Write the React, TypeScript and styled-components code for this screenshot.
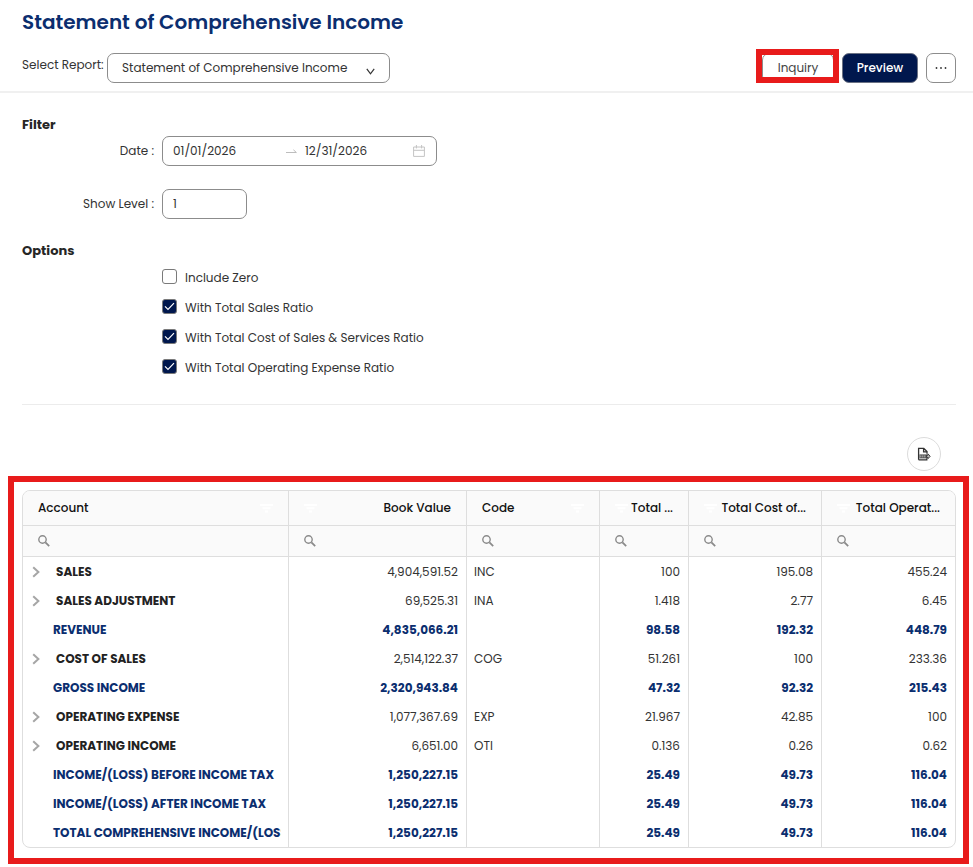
import React, { useState } from "react";
import styled, { createGlobalStyle } from "styled-components";

const NAVY = "#00174d";
const BLUE = "#0b2e6f";
const RED = "#e81b1b";
const LINE = "#dedede";

const GlobalStyle = createGlobalStyle`
  *, *::before, *::after { box-sizing: border-box; }
  body {
    margin: 0;
    background: #fff;
    color: #333;
    font-family: Poppins, Inter, "Open Sans", sans-serif;
    font-size: 12px;
    line-height: 20px;
  }
  button, input, select { font: inherit; color: inherit; margin: 0; }
`;

const Header = styled.header`
  padding: 7px 17px 8px 22px;
  border-bottom: 2px solid #f0f0f0;
`;

const Title = styled.h1`
  margin: 0 0 16px;
  font-size: 20px;
  line-height: 30px;
  font-weight: 600;
  color: ${BLUE};
`;

const Toolbar = styled.div`
  display: flex;
  align-items: center;
  justify-content: space-between;
`;

const ReportPicker = styled.div`
  display: flex;
  gap: 3px;
`;

const PickerLabel = styled.label`
  width: 82px;
  padding-top: 2px;
  white-space: nowrap;
`;

const SelectShell = styled.div`
  position: relative;
  width: 283px;
`;

const Select = styled.select`
  appearance: none;
  width: 100%;
  height: 30px;
  padding: 0 32px 0 14px;
  border: 1px solid #8c8c8c;
  border-radius: 7px;
  background: #fff;
`;

const SelectArrow = styled.svg`
  position: absolute;
  right: 15px;
  top: 15px;
  pointer-events: none;
`;

const Actions = styled.div`
  display: flex;
  gap: 8px;
`;

const Button = styled.button<{ $primary?: boolean; $width: number }>`
  display: flex;
  align-items: center;
  justify-content: center;
  width: ${(p) => p.$width}px;
  height: 30px;
  padding: 0;
  border: 1px solid ${(p) => (p.$primary ? "#6b7284" : "#8c8c8c")};
  border-radius: 7px;
  background: ${(p) => (p.$primary ? NAVY : "#fff")};
  color: ${(p) => (p.$primary ? "#fff" : "#444")};
  font-weight: ${(p) => (p.$primary ? 500 : 400)};
`;

const Marked = styled.div`
  position: relative;
  &::after {
    content: "";
    position: absolute;
    inset: -4px -5px 0 -6px;
    border: 6px solid ${RED};
    pointer-events: none;
  }
`;

const Main = styled.main`
  padding: 22px 17px 0 22px;
`;

const SectionTitle = styled.h2`
  margin: 0 0 1px;
  font-size: 13px;
  line-height: 20px;
  font-weight: 700;
  color: #262626;
`;

const Fields = styled.div`
  display: flex;
  flex-direction: column;
  gap: 23px;
  margin-bottom: 22px;
`;

const Field = styled.div`
  display: grid;
  grid-template-columns: 132px auto;
  justify-content: start;
  align-items: center;
  column-gap: 8px;
`;

const FieldLabel = styled.label`
  text-align: right;
`;

const DateRange = styled.div`
  display: flex;
  align-items: center;
  width: 275px;
  height: 30px;
  padding: 0 11px 0 10px;
  border: 1px solid #8c8c8c;
  border-radius: 7px;
`;

const DateInput = styled.input`
  flex: 1;
  min-width: 0;
  padding: 0;
  border: 0;
  outline: 0;
  background: none;
`;

const RangeArrow = styled.svg`
  margin: 0 8px 0 5px;
`;

const LevelInput = styled.input`
  width: 85px;
  height: 30px;
  padding: 0 10px;
  border: 1px solid #8c8c8c;
  border-radius: 7px;
`;

const OptionList = styled.div`
  display: flex;
  flex-direction: column;
  padding-left: 140px;
`;

const Option = styled.label`
  display: flex;
  align-items: center;
  gap: 8px;
  height: 30px;
`;

const OptionText = styled.span`
  padding-top: 2px;
`;

const CheckShell = styled.span`
  display: grid;
  padding-bottom: 1px;
  > * { grid-area: 1 / 1; place-self: center; }
  svg { pointer-events: none; }
`;

const Check = styled.input`
  appearance: none;
  width: 15px;
  height: 15px;
  border: 1px solid #7a7a7a;
  border-radius: 3px;
  background: #fff;
  &:checked { background: ${NAVY}; }
`;

const Rule = styled.hr`
  margin: 22px 0 32px;
  border: 0;
  border-top: 1px solid #ececec;
`;

const GridTools = styled.div`
  display: flex;
  justify-content: flex-end;
  padding-right: 32px;
`;

const RoundButton = styled.button`
  display: flex;
  align-items: center;
  justify-content: center;
  width: 34px;
  height: 34px;
  padding: 0;
  border: 1px solid #dcdcdc;
  border-radius: 50%;
  background: #fff;
`;

const Frame = styled.section`
  margin: 5px 4px 3px 8px;
  padding: 8px 7px 10px 8px;
  border: 6px solid ${RED};
`;

const TableShell = styled.div`
  border: 1px solid ${LINE};
  border-radius: 8px;
  overflow: hidden;
`;

const Table = styled.table`
  width: 100%;
  table-layout: fixed;
  border-collapse: separate;
  border-spacing: 0;

  th, td { border-right: 1px solid ${LINE}; }
  th:last-child, td:last-child { border-right: 0; }
`;

const Col = styled.col<{ $width: number }>`
  width: ${(p) => p.$width}px;
`;

const HeadCell = styled.th`
  height: 35px;
  padding: 0 15px;
  border-bottom: 1px solid ${LINE};
  background: #fafafa;
  color: #111;
  font-weight: 500;
`;

const HeadContent = styled.div<{ $end?: boolean }>`
  display: flex;
  flex-direction: ${(p) => (p.$end ? "row-reverse" : "row")};
  align-items: center;
  justify-content: space-between;
  white-space: nowrap;
`;

const SearchCell = styled.td`
  height: 31px;
  padding: 0 15px;
  border-bottom: 1px solid ${LINE};
  background: #fafafa;
`;

const SearchBox = styled.label`
  display: flex;
  align-items: center;
  gap: 6px;
`;

const SearchInput = styled.input`
  flex: 1;
  min-width: 0;
  padding: 0;
  border: 0;
  outline: 0;
  background: none;
`;

const Cell = styled.td<{ $end?: boolean; $total?: boolean }>`
  height: 29px;
  padding: ${(p) => (p.$end ? "0 8px" : "0 7px")};
  text-align: ${(p) => (p.$end ? "right" : "left")};
  color: ${(p) => (p.$total ? BLUE : "#333")};
  font-weight: ${(p) => (p.$total ? 700 : 400)};
  white-space: nowrap;
`;

const AccountName = styled.div<{ $total?: boolean }>`
  display: flex;
  align-items: center;
  overflow: hidden;
  padding-left: ${(p) => (p.$total ? 23 : 0)}px;
  color: ${(p) => (p.$total ? BLUE : "#222")};
  font-weight: 700;
`;

const Expander = styled.button`
  display: flex;
  align-items: center;
  width: 26px;
  height: 20px;
  padding: 0 0 0 2px;
  border: 0;
  background: none;
`;

const FilterIcon = () => (
  <svg width="13" height="9" viewBox="0 0 13 9" fill="none" stroke="#fff" strokeWidth="2" aria-hidden="true">
    <path d="M0 1h13M2.5 4.2h8M5 7.6h3" />
  </svg>
);

const SearchIcon = () => (
  <svg width="12" height="12" viewBox="0 0 12 12" fill="none" stroke="#8a8a8a" aria-hidden="true">
    <circle cx="4.5" cy="4.5" r="3.7" strokeWidth="1.4" />
    <path d="M7.4 7.4l3.8 3.8" strokeWidth="1.8" />
  </svg>
);

const ChevronIcon = () => (
  <svg width="9" height="12" viewBox="0 0 9 12" fill="none" stroke="#a6a6a6" strokeWidth="2" aria-hidden="true">
    <path d="M1.2 1.2L6.4 6l-5.2 4.8" />
  </svg>
);

const CalendarIcon = () => (
  <svg width="12" height="12" viewBox="0 0 12 12" fill="none" stroke="#c4c4c4" aria-hidden="true">
    <path d="M0.6 2h10.8v9.4H0.6zM0.6 5.3h10.8M3.4 0v3.4M8.6 0v3.4" />
  </svg>
);

const ExportIcon = () => (
  <svg width="14" height="14" viewBox="0 0 14 14" fill="none" stroke="#333" aria-hidden="true">
    <path d="M1.6 12.8V1.4h5.2l3.2 3.2v2.2M6.6 1.6v3.2h3.2M1.6 12.8h8.2v-1.6" strokeWidth="1.3" />
    <path d="M2.4 7.4h8v4h-8z" fill="#555" stroke="none" />
    <path d="M3.8 8.4v2M5.8 8.4v2M7.8 8.4v2" stroke="#ddd" strokeWidth="0.7" />
    <path d="M9.6 8.2h1.4V6.9l2.2 2.4-2.2 2.4v-1.3H9.6z" fill="#bbb" strokeWidth="0.9" />
  </svg>
);

const columns = [
  { title: "Account", width: 266, end: false },
  { title: "Book Value", width: 178, end: true },
  { title: "Code", width: 133, end: false },
  { title: "Total ...", width: 89, end: true },
  { title: "Total Cost of...", width: 133, end: true },
  { title: "Total Operat...", width: 133, end: true },
];

type Row = { account: string; values: string[]; total?: boolean };

const rows: Row[] = [
  { account: "SALES", values: ["4,904,591.52", "INC", "100", "195.08", "455.24"] },
  { account: "SALES ADJUSTMENT", values: ["69,525.31", "INA", "1.418", "2.77", "6.45"] },
  { account: "REVENUE", values: ["4,835,066.21", "", "98.58", "192.32", "448.79"], total: true },
  { account: "COST OF SALES", values: ["2,514,122.37", "COG", "51.261", "100", "233.36"] },
  { account: "GROSS INCOME", values: ["2,320,943.84", "", "47.32", "92.32", "215.43"], total: true },
  { account: "OPERATING EXPENSE", values: ["1,077,367.69", "EXP", "21.967", "42.85", "100"] },
  { account: "OPERATING INCOME", values: ["6,651.00", "OTI", "0.136", "0.26", "0.62"] },
  { account: "INCOME/(LOSS) BEFORE INCOME TAX", values: ["1,250,227.15", "", "25.49", "49.73", "116.04"], total: true },
  { account: "INCOME/(LOSS) AFTER INCOME TAX", values: ["1,250,227.15", "", "25.49", "49.73", "116.04"], total: true },
  { account: "TOTAL COMPREHENSIVE INCOME/(LOSS)", values: ["1,250,227.15", "", "25.49", "49.73", "116.04"], total: true },
];

const initialOptions = [
  { label: "Include Zero", checked: false },
  { label: "With Total Sales Ratio", checked: true },
  { label: "With Total Cost of Sales & Services Ratio", checked: true },
  { label: "With Total Operating Expense Ratio", checked: true },
];

export default function App() {
  const [options, setOptions] = useState(initialOptions);
  const toggle = (index: number) =>
    setOptions(options.map((o, i) => (i === index ? { ...o, checked: !o.checked } : o)));

  return (
    <>
      <GlobalStyle />
      <Header>
        <Title>Statement of Comprehensive Income</Title>
        <Toolbar>
          <ReportPicker>
            <PickerLabel htmlFor="report">Select Report:</PickerLabel>
            <SelectShell>
              <Select id="report">
                <option>Statement of Comprehensive Income</option>
              </Select>
              <SelectArrow width="9" height="7" viewBox="0 0 9 7" fill="none" stroke="#333" strokeWidth="1.2">
                <path d="M0.8 0.8l3.7 5L8.2 0.8" />
              </SelectArrow>
            </SelectShell>
          </ReportPicker>
          <Actions>
            <Marked>
              <Button type="button" $width={72}>Inquiry</Button>
            </Marked>
            <Button type="button" $primary $width={76}>Preview</Button>
            <Button type="button" $width={30} aria-label="More actions">
              <svg width="12" height="2" viewBox="0 0 12 2" fill="#333" aria-hidden="true">
                <circle cx="1.5" cy="1" r="0.9" />
                <circle cx="6" cy="1" r="0.9" />
                <circle cx="10.5" cy="1" r="0.9" />
              </svg>
            </Button>
          </Actions>
        </Toolbar>
      </Header>

      <Main>
        <SectionTitle>Filter</SectionTitle>
        <Fields>
          <Field>
            <FieldLabel htmlFor="date-from">Date :</FieldLabel>
            <DateRange>
              <DateInput id="date-from" defaultValue="01/01/2026" />
              <RangeArrow width="11" height="5" viewBox="0 0 11 5" fill="none" stroke="#bdbdbd" aria-hidden="true">
                <path d="M0 3.5h10.4L7.4 0.8" />
              </RangeArrow>
              <DateInput aria-label="Date to" defaultValue="12/31/2026" />
              <CalendarIcon />
            </DateRange>
          </Field>
          <Field>
            <FieldLabel htmlFor="level">Show Level :</FieldLabel>
            <LevelInput id="level" defaultValue="1" />
          </Field>
        </Fields>

        <SectionTitle>Options</SectionTitle>
        <OptionList>
          {options.map((option, i) => (
            <Option key={option.label}>
              <CheckShell>
                <Check type="checkbox" checked={option.checked} onChange={() => toggle(i)} />
                {option.checked && (
                  <svg width="11" height="9" viewBox="0 0 11 9" fill="none" stroke="#fff" strokeWidth="1.2" aria-hidden="true">
                    <path d="M1 4.4l3 3L10 1.2" />
                  </svg>
                )}
              </CheckShell>
              <OptionText>{option.label}</OptionText>
            </Option>
          ))}
        </OptionList>
        <Rule />
      </Main>

      <GridTools>
        <RoundButton type="button" aria-label="Export">
          <ExportIcon />
        </RoundButton>
      </GridTools>

      <Frame>
        <TableShell>
          <Table>
            <colgroup>
              {columns.map((c) => (
                <Col key={c.title} $width={c.width} />
              ))}
            </colgroup>
            <thead>
              <tr>
                {columns.map((c) => (
                  <HeadCell key={c.title} scope="col">
                    <HeadContent $end={c.end}>
                      {c.title}
                      <FilterIcon />
                    </HeadContent>
                  </HeadCell>
                ))}
              </tr>
              <tr>
                {columns.map((c) => (
                  <SearchCell key={c.title}>
                    <SearchBox>
                      <SearchIcon />
                      <SearchInput aria-label={`Search ${c.title}`} />
                    </SearchBox>
                  </SearchCell>
                ))}
              </tr>
            </thead>
            <tbody>
              {rows.map((row) => (
                <tr key={row.account}>
                  <Cell>
                    <AccountName $total={row.total}>
                      {!row.total && (
                        <Expander type="button" aria-label={`Expand ${row.account}`}>
                          <ChevronIcon />
                        </Expander>
                      )}
                      {row.account}
                    </AccountName>
                  </Cell>
                  {row.values.map((value, i) => (
                    <Cell key={i} $end={columns[i + 1].end} $total={row.total}>
                      {value}
                    </Cell>
                  ))}
                </tr>
              ))}
            </tbody>
          </Table>
        </TableShell>
      </Frame>
    </>
  );
}
